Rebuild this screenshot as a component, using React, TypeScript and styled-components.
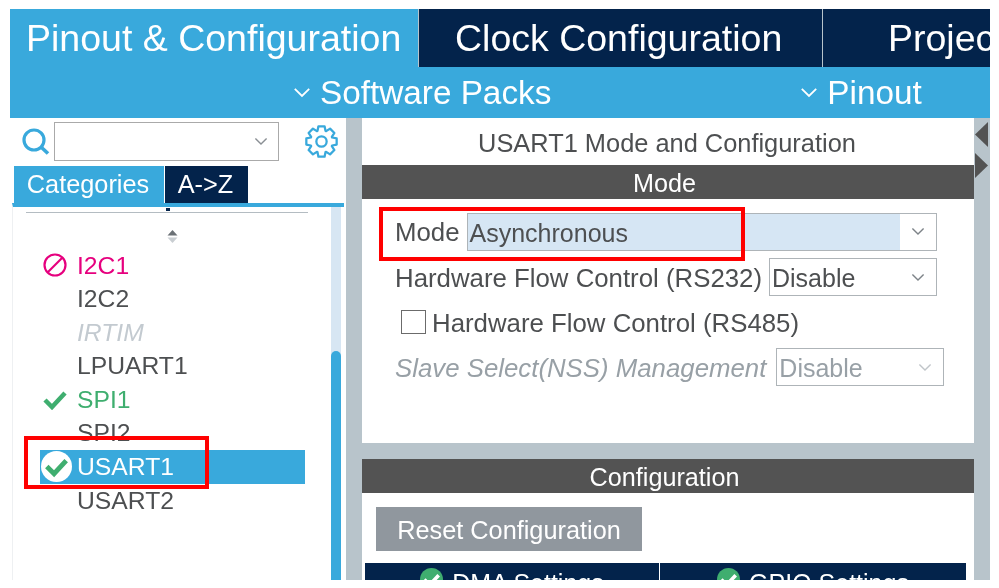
import React from 'react';
import styled, { createGlobalStyle } from 'styled-components';

const GlobalStyle = createGlobalStyle`
  html, body {
    margin: 0;
    background: #fff;
  }
  body {
    font-family: 'Liberation Sans', Arial, sans-serif;
  }
`;

const NAVY = '#03234b';
const BLUE = '#39a9dc';
const GREY = '#b8c4cb';
const TEXT = '#4d4f51';
const GREEN = '#3fae6f';

const Page = styled.div`
  width: 999px;
  height: 588px;
  padding: 9px 9px 8px 10px;
  box-sizing: border-box;
`;

// the reference is an upscaled capture, so everything in it is slightly soft
const Frame = styled.div`
  position: relative;
  width: 980px;
  height: 571px;
  overflow: hidden;
  display: flex;
  flex-direction: column;
  background: ${GREY};
  filter: blur(0.45px);
`;

const TabRow = styled.div`
  display: flex;
  height: 58px;
  flex: none;
`;

const MainTab = styled.div<{ $active?: boolean; $width: number; $left: number }>`
  flex: none;
  width: ${({ $width }) => $width}px;
  box-sizing: border-box;
  padding-left: ${({ $left }) => $left}px;
  margin-right: 1px;
  background: ${({ $active }) => ($active ? BLUE : NAVY)};
  color: #fff;
  font-size: 37.5px;
  line-height: 58px;
  white-space: nowrap;
  overflow: hidden;
`;

const SubBar = styled.div`
  height: 51px;
  flex: none;
  display: flex;
  background: ${BLUE};
  color: #fff;
  font-size: 33.3px;
  line-height: 55px;
`;

const SubItem = styled.div<{ $left: number }>`
  display: flex;
  align-items: center;
  gap: 9px;
  margin-left: ${({ $left }) => $left}px;
  white-space: nowrap;
`;

const Columns = styled.div`
  flex: 1;
  min-height: 0;
  display: flex;
`;

const LeftPanel = styled.div`
  width: 336px;
  flex: none;
  background: #fff;
  display: flex;
  flex-direction: column;
`;

const SearchRow = styled.div`
  height: 47px;
  flex: none;
  display: flex;
  align-items: center;
  padding-left: 12px;
  margin-bottom: 1px;
`;

const SearchBox = styled.div`
  width: 225px;
  height: 39px;
  margin: 0 26px 0 4px;
  box-sizing: border-box;
  border: 1px solid #aaa;
  display: flex;
  align-items: center;
  justify-content: flex-end;
  padding-right: 10px;
`;

const ViewTabs = styled.div`
  display: flex;
  height: 37px;
  flex: none;
  padding-left: 4px;
`;

const ViewTab = styled.div<{ $active?: boolean; $width: number }>`
  width: ${({ $width }) => $width}px;
  box-sizing: border-box;
  padding-right: 2px;
  margin-right: 1px;
  background: ${({ $active }) => ($active ? BLUE : NAVY)};
  color: #fff;
  font-size: 25.3px;
  line-height: 37px;
  text-align: center;
`;

const ListArea = styled.div`
  flex: 1;
  min-height: 0;
  margin-left: 2px;
  border-top: 4px solid ${BLUE};
  border-left: 1px solid #eef0f2;
  display: flex;
  width: 332px;
  box-sizing: border-box;
`;

const ListBody = styled.div`
  position: relative;
  flex: 1;
  padding-top: 5px;
`;

// bottom of the descender of the group heading scrolled out above the list
const ClippedGlyph = styled.div`
  position: absolute;
  left: 153px;
  top: 1px;
  width: 4px;
  height: 3px;
  background: ${NAVY};
`;

const ListRule = styled.div`
  height: 1px;
  margin: 0 23px 0 13px;
  background: #b4bcc2;
`;

const SortMark = styled.div`
  display: flex;
  justify-content: center;
  margin-top: 16px;
  height: 16px;
`;

const List = styled.div`
  margin-top: 3.5px;
  padding: 0 26px 0 27px;
`;

const Row = styled.div<{ $selected?: boolean; $tone?: string; $italic?: boolean }>`
  position: relative;
  height: 33.6px;
  line-height: 33.6px;
  padding-left: 37px;
  font-size: 24.7px;
  font-style: ${({ $italic }) => ($italic ? 'italic' : 'normal')};
  color: ${({ $selected, $tone }) => ($selected ? '#fff' : $tone || TEXT)};
  background: ${({ $selected }) => ($selected ? BLUE : 'transparent')};
`;

const RowIcon = styled.span<{ $left: number }>`
  position: absolute;
  left: ${({ $left }) => $left}px;
  top: 0;
  height: 100%;
  display: flex;
  align-items: center;
`;

const ScrollTrack = styled.div`
  width: 10px;
  flex: none;
  background: #d7e6f3;
  margin-right: 3px;
  display: flex;
  flex-direction: column;
  justify-content: flex-end;
`;

const ScrollThumb = styled.div`
  height: 229px;
  background: ${BLUE};
  border-radius: 5px 5px 0 0;
`;

const Gutter = styled.div`
  width: 16px;
  flex: none;
`;

const RightPanel = styled.div`
  flex: 1;
  min-width: 0;
  display: flex;
  flex-direction: column;
`;

const Card = styled.div<{ $height: number; $gap?: number }>`
  height: ${({ $height }) => $height}px;
  margin-top: ${({ $gap }) => $gap ?? 0}px;
  flex: none;
  background: #fff;
`;

const CardTitle = styled.div`
  height: 47px;
  line-height: 50px;
  padding-right: 2px;
  text-align: center;
  font-size: 25.4px;
  color: ${TEXT};
`;

const Band = styled.div`
  height: 34px;
  line-height: 36px;
  padding-right: 7px;
  background: #535353;
  color: #fff;
  font-size: 25.2px;
  text-align: center;
`;

const ModeForm = styled.div`
  padding: 13px 0 0 33px;
  display: flex;
  flex-direction: column;
  color: ${TEXT};
  font-size: 25.8px;
`;

const FormRow = styled.div<{ $height: number; $muted?: boolean }>`
  height: ${({ $height }) => $height}px;
  display: flex;
  align-items: center;
  white-space: nowrap;
  font-style: ${({ $muted }) => ($muted ? 'italic' : 'normal')};
  color: ${({ $muted }) => ($muted ? '#98a0a6' : TEXT)};
`;

const FieldLabel = styled.span`
  padding-top: 2px;
`;

const Select = styled.div<{ $width: number; $muted?: boolean; $gap: number }>`
  width: ${({ $width }) => $width}px;
  height: 38px;
  flex: none;
  margin-left: ${({ $gap }) => $gap}px;
  box-sizing: border-box;
  border: 1px solid #aeb4b8;
  display: flex;
  align-items: center;
  font-size: 25px;
  font-style: normal;
  color: ${({ $muted }) => ($muted ? '#98a0a6' : TEXT)};
`;

const SelectValue = styled.div<{ $highlight?: boolean }>`
  flex: 1;
  height: 100%;
  line-height: 39px;
  padding-left: 2px;
  background: ${({ $highlight }) => ($highlight ? '#d6e6f4' : 'transparent')};
`;

const SelectArrow = styled.div`
  width: 36px;
  flex: none;
  display: flex;
  justify-content: center;
`;

const CheckBox = styled.div`
  width: 25px;
  height: 24px;
  margin: 0 6px 0 6px;
  box-sizing: border-box;
  border: 1px solid #6b6b6b;
  background: #fff;
`;

const ResetButton = styled.div`
  width: 266px;
  height: 44px;
  margin: 14px 0 0 14px;
  background: #90979e;
  color: #fff;
  font-size: 25.3px;
  line-height: 46px;
  text-align: center;
`;

const SettingsTabs = styled.div`
  display: grid;
  grid-template-columns: 294px 306px;
  gap: 1px;
  margin: 12px 0 0 3px;
  height: 40px;
`;

const SettingsTab = styled.div`
  background: ${NAVY};
  color: #fff;
  font-size: 25px;
  line-height: 36px;
  display: flex;
  justify-content: center;
  gap: 9px;
  padding-top: 2px;

  svg {
    margin-top: 3px;
  }
`;

const SideRail = styled.div`
  width: 15px;
  margin-right: 1px;
  flex: none;
  display: flex;
  flex-direction: column;
  gap: 6px;
  padding-top: 4px;
`;

const Highlight = styled.div<{ $x: number; $y: number; $w: number; $h: number }>`
  position: absolute;
  left: ${({ $x }) => $x}px;
  top: ${({ $y }) => $y}px;
  width: ${({ $w }) => $w}px;
  height: ${({ $h }) => $h}px;
  box-sizing: border-box;
  border: 4px solid #ff0000;
`;

function Chevron({ color, size = 18 }: { color: string; size?: number }) {
  return (
    <svg width={size} height={size * 0.6} viewBox="0 0 20 12" fill="none">
      <path d="M2 2l8 8 8-8" stroke={color} strokeWidth="2" />
    </svg>
  );
}

function SearchIcon() {
  return (
    <svg width="28" height="28" viewBox="0 0 28 28" fill="none">
      <circle cx="12" cy="12" r="10" stroke={BLUE} strokeWidth="3.2" />
      <path d="M19 19l7 6.5" stroke={BLUE} strokeWidth="3.6" />
    </svg>
  );
}

// eight square teeth round a ring
function gearPath() {
  const points: string[] = [];
  for (let i = 0; i < 8; i++) {
    const mid = (i * Math.PI) / 4;
    const steps: [number, number][] = [
      [11, -0.36],
      [15, -0.2],
      [15, 0.2],
      [11, 0.36],
    ];
    steps.forEach(([radius, offset]) => {
      const x = 16 + radius * Math.sin(mid + offset);
      const y = 16 - radius * Math.cos(mid + offset);
      points.push(`${x.toFixed(2)} ${y.toFixed(2)}`);
    });
  }
  return `M${points.join('L')}Z`;
}

function GearIcon() {
  return (
    <svg width="33" height="33" viewBox="0 0 32 32" fill="none" stroke={BLUE} strokeWidth="2.2" strokeLinejoin="round">
      <path d={gearPath()} />
      <circle cx="16" cy="16" r="5" />
    </svg>
  );
}

function BlockedIcon() {
  return (
    <svg width="24" height="24" viewBox="0 0 24 24" fill="none" stroke="#e6007e" strokeWidth="2.2">
      <circle cx="12" cy="12" r="10.5" />
      <path d="M5 19L19 5" />
    </svg>
  );
}

function CheckIcon() {
  return (
    <svg width="24" height="20" viewBox="0 0 24 20" fill="none">
      <path d="M2 10l7 7L22 3" stroke={GREEN} strokeWidth="4.5" />
    </svg>
  );
}

function CheckDisc({ size, disc, tick }: { size: number; disc: string; tick: string }) {
  return (
    <svg width={size} height={size} viewBox="0 0 32 32">
      <circle cx="16" cy="16" r="16" fill={disc} />
      <path d="M6 16l7.5 7.5L26 10" fill="none" stroke={tick} strokeWidth="5" />
    </svg>
  );
}

function SortIcon() {
  return (
    <svg width="11" height="15" viewBox="0 0 11 15">
      <path d="M5.5 1l5 5.5H.5z" fill="#6b7176" />
      <path d="M5.5 14L.5 8.5h10z" fill="#c9ced2" />
    </svg>
  );
}

function RailArrow({ flip }: { flip?: boolean }) {
  return (
    <svg width="13" height="25" viewBox="0 0 13 25" style={{ marginLeft: 1, display: 'block' }}>
      <path d={flip ? 'M0 0l13 12.5L0 25z' : 'M13 0L0 12.5 13 25z'} fill="#535353" />
    </svg>
  );
}

const rows: { name: string; tone?: string; italic?: boolean; icon?: React.ReactNode; iconLeft?: number; selected?: boolean }[] = [
  { name: 'I2C1', tone: '#e6007e', icon: <BlockedIcon />, iconLeft: 3 },
  { name: 'I2C2' },
  { name: 'IRTIM', tone: '#c3cad0', italic: true },
  { name: 'LPUART1' },
  { name: 'SPI1', tone: GREEN, icon: <CheckIcon />, iconLeft: 3 },
  { name: 'SPI2' },
  { name: 'USART1', selected: true, icon: <CheckDisc size={31} disc="#fff" tick={GREEN} />, iconLeft: 1 },
  { name: 'USART2' },
];

export default function App() {
  return (
    <Page>
      <GlobalStyle />
      <Frame>
        <TabRow>
          <MainTab $active $width={408} $left={16}>Pinout &amp; Configuration</MainTab>
          <MainTab $width={403} $left={36}>Clock Configuration</MainTab>
          <MainTab $width={167} $left={65}>Project Manager</MainTab>
        </TabRow>
        <SubBar>
          <SubItem $left={283}><Chevron color="#fff" />Software Packs</SubItem>
          <SubItem $left={249}><Chevron color="#fff" />Pinout</SubItem>
        </SubBar>
        <Columns>
          <LeftPanel>
            <SearchRow>
              <SearchIcon />
              <SearchBox><Chevron color="#8a8f94" size={14} /></SearchBox>
              <GearIcon />
            </SearchRow>
            <ViewTabs>
              <ViewTab $active $width={150}>Categories</ViewTab>
              <ViewTab $width={83}>A-&gt;Z</ViewTab>
            </ViewTabs>
            <ListArea>
              <ListBody>
                <ClippedGlyph />
                <ListRule />
                <SortMark><SortIcon /></SortMark>
                <List>
                  {rows.map(row => (
                    <Row key={row.name} $selected={row.selected} $tone={row.tone} $italic={row.italic}>
                      {row.icon && <RowIcon $left={row.iconLeft ?? 0}>{row.icon}</RowIcon>}
                      {row.name}
                    </Row>
                  ))}
                </List>
              </ListBody>
              <ScrollTrack><ScrollThumb /></ScrollTrack>
            </ListArea>
          </LeftPanel>
          <Gutter />
          <RightPanel>
            <Card $height={325}>
              <CardTitle>USART1 Mode and Configuration</CardTitle>
              <Band>Mode</Band>
              <ModeForm>
                <FormRow $height={39}>
                  <FieldLabel>Mode</FieldLabel>
                  <Select $width={470} $gap={7}>
                    <SelectValue $highlight>Asynchronous</SelectValue>
                    <SelectArrow><Chevron color="#7d8388" size={14} /></SelectArrow>
                  </Select>
                </FormRow>
                <FormRow $height={52}>
                  <FieldLabel>Hardware Flow Control (RS232)</FieldLabel>
                  <Select $width={168} $gap={7}>
                    <SelectValue>Disable</SelectValue>
                    <SelectArrow><Chevron color="#7d8388" size={14} /></SelectArrow>
                  </Select>
                </FormRow>
                <FormRow $height={38}>
                  <CheckBox />
                  <FieldLabel>Hardware Flow Control (RS485)</FieldLabel>
                </FormRow>
                <FormRow $height={52} $muted>
                  <FieldLabel>Slave Select(NSS) Management</FieldLabel>
                  <Select $width={168} $gap={10} $muted>
                    <SelectValue>Disable</SelectValue>
                    <SelectArrow><Chevron color="#c0c5c9" size={14} /></SelectArrow>
                  </Select>
                </FormRow>
              </ModeForm>
            </Card>
            <Card $height={200} $gap={16}>
              <Band>Configuration</Band>
              <ResetButton>Reset Configuration</ResetButton>
              <SettingsTabs>
                <SettingsTab><CheckDisc size={23} disc={GREEN} tick="#fff" />DMA Settings</SettingsTab>
                <SettingsTab><CheckDisc size={23} disc={GREEN} tick="#fff" />GPIO Settings</SettingsTab>
              </SettingsTabs>
            </Card>
          </RightPanel>
          <SideRail>
            <RailArrow />
            <RailArrow flip />
          </SideRail>
        </Columns>
        <Highlight $x={369} $y={198} $w={366} $h={54} />
        <Highlight $x={14} $y={427} $w={185} $h={53} />
      </Frame>
    </Page>
  );
}
